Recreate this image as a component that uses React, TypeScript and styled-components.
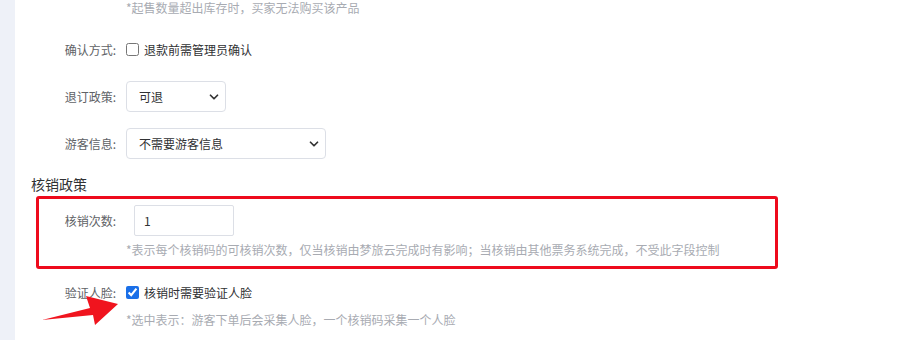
import React from "react";
import styled, { createGlobalStyle } from "styled-components";
import { ChevronDown } from "lucide-react";

const GlobalStyle = createGlobalStyle`
  html, body {
    margin: 0;
    padding: 0;
    background: #ffffff;
  }
  body {
    font-family: "Noto Sans CJK SC", "Noto Sans", sans-serif;
    font-size: 12px;
    color: #333333;
  }
`;

export default function App() {
  return (
    <>
      <GlobalStyle />
      <Page>
        <SideStrip />
        <Content>
          <Hint $indent={95}>*起售数量超出库存时，买家无法购买该产品</Hint>

          <FormItem $top={18}>
            <Label>确认方式:</Label>
            <CheckLabel>
              <Check type="checkbox" />
              退款前需管理员确认
            </CheckLabel>
          </FormItem>

          <FormItem $top={16}>
            <Label>退订政策:</Label>
            <SelectWrap $width={100}>
              <Select defaultValue="1">
                <option value="1">可退</option>
                <option value="0">不可退</option>
              </Select>
              <Arrow size={14} strokeWidth={3} />
            </SelectWrap>
          </FormItem>

          <FormItem $top={16}>
            <Label>游客信息:</Label>
            <SelectWrap $width={200}>
              <Select defaultValue="none">
                <option value="none">不需要游客信息</option>
                <option value="one">需要一位游客信息</option>
              </Select>
              <Arrow size={14} strokeWidth={3} />
            </SelectWrap>
          </FormItem>

          <SectionTitle>核销政策</SectionTitle>

          <Highlight>
            <FormItem $top={0}>
              <Label $width={87}>核销次数:</Label>
              <Input defaultValue="1" />
            </FormItem>
            <Hint $indent={87} $top={6}>
              *表示每个核销码的可核销次数，仅当核销由梦旅云完成时有影响；当核销由其他票务系统完成，不受此字段控制
            </Hint>
          </Highlight>

          <FormItem $top={8}>
            <Label>验证人脸:</Label>
            <CheckLabel>
              <Check type="checkbox" defaultChecked />
              核销时需要验证人脸
            </CheckLabel>
          </FormItem>
          <Hint $indent={95} $top={4}>
            *选中表示：游客下单后会采集人脸，一个核销码采集一个人脸
          </Hint>
        </Content>

        <Pointer width="902" height="340" viewBox="0 0 902 340">
          <polygon
            points="42,320 90,308 86,296 118,304 95,325 93,315"
            fill="#f0141e"
          />
        </Pointer>
      </Page>
    </>
  );
}

const Page = styled.div`
  position: relative;
  display: flex;
  width: 902px;
  height: 340px;
  overflow: hidden;
`;

const SideStrip = styled.div`
  width: 15px;
  flex-shrink: 0;
  background: #eef1f8;
`;

const Content = styled.div`
  flex: 1;
  padding-left: 16px;
  display: flex;
  flex-direction: column;
`;

const Hint = styled.div<{ $indent: number; $top?: number }>`
  margin-left: ${(p) => p.$indent}px;
  margin-top: ${(p) => p.$top ?? 0}px;
  line-height: 16px;
  font-size: 12px;
  color: #a8abb2;
  white-space: nowrap;
`;

const FormItem = styled.div<{ $top: number }>`
  display: flex;
  align-items: center;
  height: 31px;
  margin-top: ${(p) => p.$top}px;
`;

const Label = styled.label<{ $width?: number }>`
  width: ${(p) => p.$width ?? 95}px;
  flex-shrink: 0;
  box-sizing: border-box;
  padding-right: 10px;
  text-align: right;
  font-size: 12px;
  color: #606266;
`;

const CheckLabel = styled.label`
  display: flex;
  align-items: center;
  gap: 5px;
  font-size: 12px;
  color: #303133;
`;

const Check = styled.input`
  width: 13px;
  height: 13px;
  margin: 0;
  accent-color: #1a6fe8;
`;

const SelectWrap = styled.div<{ $width: number }>`
  position: relative;
  width: ${(p) => p.$width}px;
  height: 31px;
`;

const Select = styled.select`
  appearance: none;
  width: 100%;
  height: 100%;
  box-sizing: border-box;
  border: 1px solid #dcdfe6;
  border-radius: 4px;
  padding: 0 24px 0 12px;
  background: #ffffff;
  font-family: inherit;
  font-size: 12px;
  color: #303133;
  outline: none;
`;

const Arrow = styled(ChevronDown)`
  position: absolute;
  right: 5px;
  top: 9px;
  color: #333333;
  pointer-events: none;
`;

const Input = styled.input`
  width: 100px;
  height: 31px;
  margin-left: 8px;
  box-sizing: border-box;
  border: 1px solid #dcdfe6;
  border-radius: 2px;
  padding: 0 9px;
  font-family: inherit;
  font-size: 12px;
  color: #303133;
  outline: none;
`;

const SectionTitle = styled.div`
  margin-top: 15px;
  line-height: 20px;
  font-size: 14px;
  color: #303133;
`;

const Highlight = styled.div`
  margin-top: 2px;
  margin-left: 5px;
  width: 742px;
  box-sizing: border-box;
  border: 3px solid #ee0a1c;
  border-radius: 3px;
  padding: 6px 0 8px;
`;

const Pointer = styled.svg`
  position: absolute;
  left: 0;
  top: 0;
  pointer-events: none;
`;
